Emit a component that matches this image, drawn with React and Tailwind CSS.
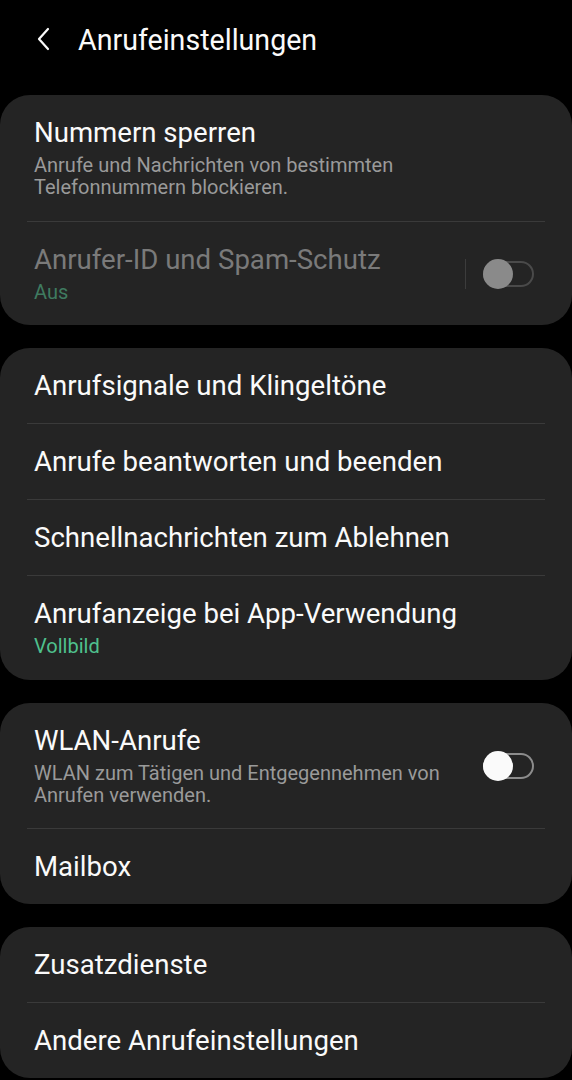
import React from 'react';

const font = { fontFamily: 'Roboto, "Noto Sans", sans-serif' };

const Toggle = ({ disabled }) => (
  <div className="relative w-[51px] h-[26px]">
    <div
      className={
        'absolute inset-0 rounded-full border-2 ' +
        (disabled ? 'border-[#4a4a4a]' : 'border-[#8c8c8c]')
      }
    />
    <div
      className={
        'absolute left-0 top-[-2px] w-[30px] h-[30px] rounded-full ' +
        (disabled ? 'bg-[#8a8a8a]' : 'bg-[#fafafa]')
      }
    />
  </div>
);

const Divider = () => <div className="mx-[27px] h-px bg-[#3a3a3a]" />;

const Row = ({ title, sub, subColor = 'text-[#9a9a9a]', dim, right }) => (
  <div className={'flex items-center pl-[34px] pr-[38px] pt-[23px] ' + (sub ? 'pb-[22.5px]' : 'pb-[22px]')}>
    <div className="flex-1 min-w-0">
      <div className={'text-[27.6px] leading-[30px] ' + (dim ? 'text-[#7a7a7a]' : 'text-[#fafafa]')}>
        {title}
      </div>
      {sub && <div className={'mt-[6px] text-[20px] leading-[22px] ' + subColor}>{sub}</div>}
    </div>
    {right}
  </div>
);

const Card = ({ children }) => (
  <div className="bg-[#242424] rounded-[30px] overflow-hidden">{children}</div>
);

export default function App() {
  return (
    <div className="min-h-screen bg-black" style={font}>
      <header className="flex items-center h-[80px] pl-[36px]">
        <svg width="16" height="24" viewBox="0 0 16 24" fill="none" className="mt-[-2px]">
          <path d="M12 2 L3 12 L12 22" stroke="#fafafa" strokeWidth="2.2" strokeLinecap="round" strokeLinejoin="round" />
        </svg>
        <h1 className="ml-[26px] text-[28.6px] text-[#fafafa]">Anrufeinstellungen</h1>
      </header>

      <div className="flex flex-col gap-[23px] pt-[15px]">
        <Card>
          <Row
            title="Nummern sperren"
            sub={<>Anrufe und Nachrichten von bestimmten<br />Telefonnummern blockieren.</>}
          />
          <Divider />
          <Row
            title="Anrufer-ID und Spam-Schutz"
            sub="Aus"
            subColor="text-[#3f7b60]"
            dim
            right={
              <div className="flex items-center">
                <div className="w-px h-[30px] bg-[#3c3c3c] mr-[17px]" />
                <Toggle disabled />
              </div>
            }
          />
        </Card>

        <Card>
          <Row title="Anrufsignale und Klingeltöne" />
          <Divider />
          <Row title="Anrufe beantworten und beenden" />
          <Divider />
          <Row title="Schnellnachrichten zum Ablehnen" />
          <Divider />
          <Row title="Anrufanzeige bei App-Verwendung" sub="Vollbild" subColor="text-[#4fc08d]" />
        </Card>

        <Card>
          <Row
            title="WLAN-Anrufe"
            sub={<>WLAN zum Tätigen und Entgegennehmen von<br />Anrufen verwenden.</>}
            right={<Toggle />}
          />
          <Divider />
          <Row title="Mailbox" />
        </Card>

        <Card>
          <Row title="Zusatzdienste" />
          <Divider />
          <Row title="Andere Anrufeinstellungen" />
        </Card>
      </div>
    </div>
  );
}
